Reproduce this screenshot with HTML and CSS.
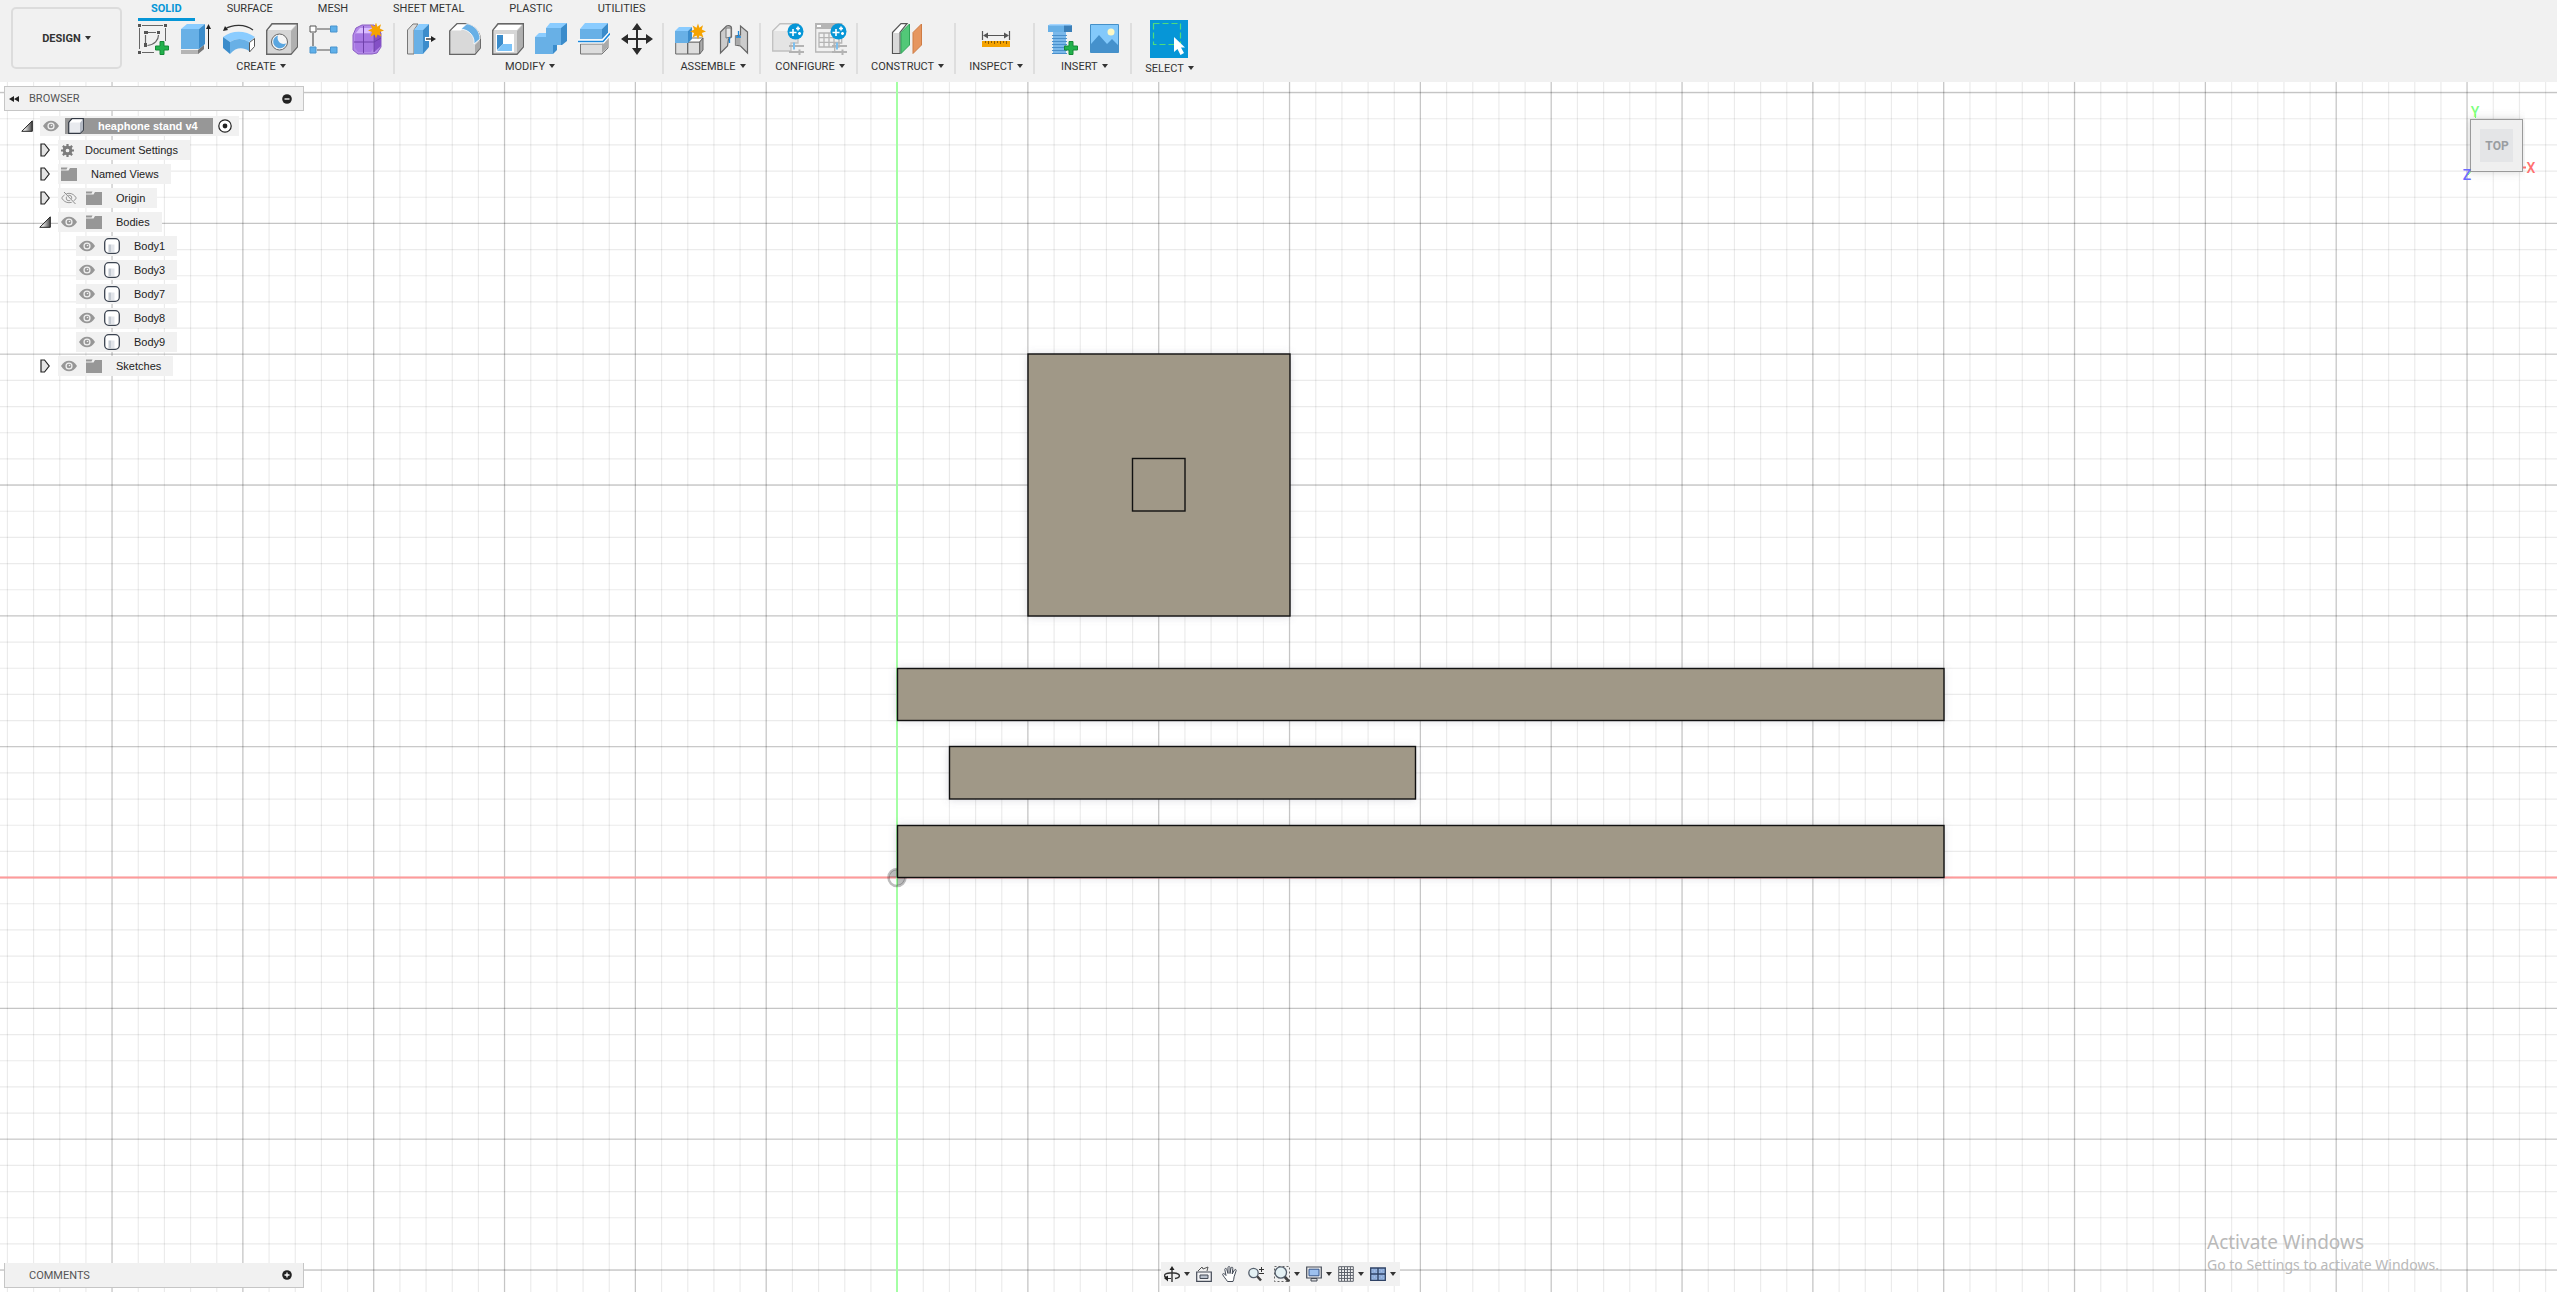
FILE: index.html
```html
<!DOCTYPE html>
<html lang="en">
<head>
<meta charset="utf-8">
<title>heaphone stand v4</title>
<link rel="stylesheet" href="styles.css">
</head>
<body>
<svg class="defs" aria-hidden="true">
  <symbol id="eye" viewBox="0 0 16 12"><path d="M0 6C2 2.500 5 .8 8 .8S14 2.500 16 6c-2 3.500-5 5.200-8 5.200S2 9.500 0 6z" fill="#979797"/><circle cx="8" cy="6" r="3.600" fill="#f1f1f1"/><circle cx="8" cy="6" r="2.300" fill="#979797"/><circle cx="8.500" cy="5.500" r=".8" fill="#f1f1f1"/></symbol>
  <symbol id="eye-off" viewBox="0 0 16 12"><path d="M.7 6C2.500 3 5 1.300 8 1.300S13.500 3 15.300 6C13.500 9 11 10.700 8 10.700S2.500 9 .7 6z" fill="none" stroke="#979797"/><circle cx="8" cy="6" r="2.800" fill="none" stroke="#979797"/><path d="M2.500 0l11.500 12" stroke="#f1f1f1" stroke-width="2"/><path d="M3 0l11.500 12" stroke="#8a8a8a"/></symbol>
  <symbol id="folder" viewBox="0 0 16 14"><path d="M0 3.500h7.500L9 1h7v13H0z" fill="#979797"/><path d="M0 .6h6.500L5.500 2.400H0z" fill="#979797"/></symbol>
  <symbol id="body" viewBox="0 0 16 16"><rect x=".7" y=".7" width="14.600" height="14.600" rx="4" fill="#fff" stroke="#3b4350" stroke-width="1.300"/><path d="M4.500 6.500h3v7.500h-3z" fill="#c3c9d1"/><path d="M7.500 6.500h3V14h-3z" fill="#e2e5ea"/></symbol>
  <symbol id="closed" viewBox="0 0 10 14"><path d="M1 1h3.500L9.200 7 4.500 13H1z" fill="#e4e4e4" stroke="#222" stroke-width="1.200"/></symbol>
  <symbol id="open" viewBox="0 0 12 12"><path d="M11.300.8v10.500H.8z" fill="url(#tri)" stroke="#222"/></symbol>
  <symbol id="plus" viewBox="0 0 14 14"><path d="M5 .5h4V5h4.500v4H9v4.500H5V9H.5V5H5z" fill="#22b14c" stroke="#148a36"/></symbol>
  <symbol id="burst" viewBox="0 0 16 16"><path d="M8 0l1.400 4.300L13 1.700l-1.200 4.200L16 8l-4.200 1.600L13.500 14l-4-2L8 16l-1.500-4-4 2 1.600-4.400L0 8l4.200-2L2.500 2l4 2.300z" fill="#f5a300"/></symbol>
  <symbol id="config" viewBox="0 0 24 32"><circle cx="15.500" cy="8.500" r="8" fill="#0696d7"/><path d="M13 6v7M9.500 9.500h7M18 3.500v4M16 5.500h4M19.500 9v3M18 10.500h3" stroke="#fff" stroke-width="1.600"/><path d="M9 23h15M9 29h15" stroke="#b3b3b3" stroke-width="2"/><path d="M14 19.500v7" stroke="#7cc0f0" stroke-width="2"/><path d="M19.500 26.500v6" stroke="#b3b3b3" stroke-width="2"/></symbol>
  <linearGradient id="tri"><stop offset=".2" stop-color="#fff"/><stop offset="1" stop-color="#444"/></linearGradient>
</svg>

<div class="app">
<header class="toolbar">
  <button class="workspace" type="button">DESIGN<i class="caret"></i></button>
  <div class="ribbon">
    <nav class="tabs">
      <a class="tab active" href="#solid">SOLID</a><a class="tab" href="#surface">SURFACE</a><a class="tab" href="#mesh">MESH</a><a class="tab" href="#sheet-metal">SHEET METAL</a><a class="tab" href="#plastic">PLASTIC</a><a class="tab" href="#utilities">UTILITIES</a>
    </nav>
    <div class="groups">
      <section class="group">
        <div class="tools">
          <button class="tool" type="button" aria-label="Create Sketch"><svg viewBox="0 0 32 32"><path d="M5 2.500h21M2.500 5v21M5 29.500h12M28.500 5v13" stroke="#666" fill="none"/><path d="M11 9.500h8M8.500 12v8M21.500 12c0 5-4 10-11 10.500" stroke="#666" fill="none" stroke-width="1.200"/><path d="M1 1h3v3H1zM27 1h3v3h-3zM1 28h3v3H1zM7 8h4v3H7zM20 8h3v3h-3zM7 20h3v4H7z" fill="#555"/><use href="#plus" x="18" y="18" width="14" height="14"/></svg></button>
          <button class="tool" type="button" aria-label="Extrude"><svg viewBox="0 0 32 32"><path d="M1 27h17l6-5v4l-6 5H1z" fill="#b5b5b5"/><path d="M18 27l6-5v4l-6 5z" fill="#777"/><path d="M1 6h18v20H1z" fill="#68b0e6"/><path d="M1 6l6-5h18l-6 5z" fill="#8accff"/><path d="M19 6l6-5v20l-6 5z" fill="#3b8ccb"/><path d="M28.500 26V5" stroke="#222"/><path d="M28.500 1L31 6h-5z" fill="#222"/></svg></button>
          <button class="tool" type="button" aria-label="Revolve"><svg viewBox="0 0 32 32"><path d="M2 6c8-5 20-5 28 1" stroke="#333" fill="none" stroke-width="1.300"/><path d="M0 8l2-5 3 4z" fill="#222"/><path d="M0 14C9 7 22 7 32 14l-6 5c-6-4-13-4-19 0z" fill="#8accff"/><path d="M7 19c6-4 13-4 19 0v9c-6-4-13-4-19 3z" fill="#68b0e6"/><path d="M0 14l7 5v12l-7-6z" fill="#3b8ccb"/><path d="M26.500 19.500l5-4v8l-5 5.500z" fill="#fff" stroke="#555"/></svg></button>
          <button class="tool" type="button" aria-label="Hole"><svg viewBox="0 0 32 32"><path d="M.7 7.500L6 .7h25.300V24L25 31.300H.7z" fill="#d6d6d6" stroke="#666" stroke-width="1.400"/><path d="M2 7l4.500-5h23L25 7z" fill="#f4f4f4"/><path d="M25 8l5.500-6v22L25 30z" fill="#b0b0b0"/><circle cx="13.500" cy="19" r="8" fill="#f5f5f5" stroke="#666"/><path d="M12 12.500a6.500 6.500 0 1 0 8 8c-5 2-10-3-8-8z" fill="#5aa6e0"/></svg></button>
          <button class="tool" type="button" aria-label="Rectangular Pattern"><svg viewBox="0 0 32 32"><path d="M8 6h13M4 10v13M8 27h13" stroke="#555" stroke-width="1.200"/><path d="M1 3h6v6H1z" fill="#fff" stroke="#555"/><path d="M21.500 3h6.500v6h-6.500zM21.500 24h6.500v6h-6.500zM1 24h6v6H1z" fill="#5fb0ea" stroke="#4a94cd"/></svg></button>
          <button class="tool" type="button" aria-label="Create Form"><svg viewBox="0 0 32 32"><path d="M1 12l3-7 6-3h12l7 8v14l-4 6-5 1H6l-5-4z" fill="#b48be8" stroke="#8a5cc4"/><path d="M3 11h18v15l-2 3H6l-3-4z" fill="#a777e3"/><path d="M4 10l4-5h14l-4 5z" fill="#d9bcff"/><path d="M22 11l7-3v15l-7 6z" fill="#8450c6"/><path d="M11.500 3v27M2 19h20l7-4M22 10v19" stroke="#6f41ab" fill="none"/><use href="#burst" x="16" y="-1" width="16" height="17"/></svg></button>
        </div>
        <button class="menu" type="button">CREATE<i class="caret"></i></button>
      </section>
      <section class="group">
        <div class="tools">
          <button class="tool" type="button" aria-label="Press Pull"><svg viewBox="0 0 32 32"><path d="M1.500 7L7 1h5L8 7v24H1.500z" fill="#ddd" stroke="#777"/><path d="M8 7h9v24H8z" fill="#68b0e6"/><path d="M8 7l5-6h10l-6 6z" fill="#8accff"/><path d="M17 7l6-6v23l-6 7z" fill="#3b8ccb"/><path d="M19 16h9" stroke="#fff" stroke-width="4"/><path d="M20 16h8" stroke="#222" stroke-width="1.300"/><path d="M30 16l-5-3v6z" fill="#222"/></svg></button>
          <button class="tool" type="button" aria-label="Fillet"><svg viewBox="0 0 32 32"><path d="M.7 8L8 .7h8C25 2 31 9 31.300 16v9L26 31.300H.7z" fill="#d9d9d9" stroke="#666" stroke-width="1.300"/><path d="M2 7.500L8.500 1.500H17L12 7.500z" fill="#fff"/><path d="M12 6l6-5.300C26 2 31 9 31 16l-6 5c1-7-4-14-13-15z" fill="#68b0e6" stroke="#fff" stroke-width=".8"/><path d="M26 22l5-5v8l-5 5z" fill="#aaa"/></svg></button>
          <button class="tool" type="button" aria-label="Shell"><svg viewBox="0 0 32 32"><path d="M.7 7.500L6 .7h25.300V24L25 31.300H.7z" fill="#d6d6d6" stroke="#666" stroke-width="1.400"/><path d="M2 7l4.500-5h23L25 7z" fill="#fff"/><path d="M25 8l5.500-6v22L25 30z" fill="#b0b0b0"/><path d="M4 11h18v18H4z" fill="#fff"/><path d="M5 12h6v9l-6 6z" fill="#3b8ccb"/><path d="M11 21h9v7H5z" fill="#7cc3f8"/></svg></button>
          <button class="tool" type="button" aria-label="Combine"><svg viewBox="0 0 32 32"><path d="M0 14h11V5h15v17h-8v9H0z" fill="#68b0e6"/><path d="M0 14l4-4h7v4zM11 5l4-5h17l-5 5z" fill="#8accff"/><path d="M26 5l6-5v18l-5 4h-5v5l-4 4v-9h8z" fill="#3b8ccb"/></svg></button>
          <button class="tool" type="button" aria-label="Split Body"><svg viewBox="0 0 32 32"><path d="M2.500 21H24l6-6v10l-6 6H2.500z" fill="#ddd" stroke="#777"/><path d="M24 21l5-5v9l-5 5z" fill="#aaa"/><path d="M2 6h22v10H2z" fill="#68b0e6"/><path d="M2 6l5-6h23l-6 6z" fill="#8accff"/><path d="M24 6l6-6v10l-6 6z" fill="#3b8ccb"/><path d="M0 18.500h25l7-8" fill="none" stroke="#fff" stroke-width="4"/><path d="M0 18.500h25l7-8" fill="none" stroke="#1a88dc" stroke-width="1.500"/></svg></button>
          <button class="tool" type="button" aria-label="Move/Copy"><svg viewBox="0 0 32 32"><path d="M16 4v24M4 16h24" stroke="#2b2b2b" stroke-width="2"/><path d="M16 0l5 7H11zM16 32l5-7H11zM0 16l7-5v10zM32 16l-7-5v10z" fill="#2b2b2b"/></svg></button>
        </div>
        <button class="menu" type="button">MODIFY<i class="caret"></i></button>
      </section>
      <section class="group">
        <div class="tools">
          <button class="tool" type="button" aria-label="New Component"><svg viewBox="0 0 32 32"><path d="M.7 19h12v12H.7zM12.700 19h12v12h-12z" fill="#ddd" stroke="#666"/><path d="M12.700 19l3-4H28l-3.300 4z" fill="#fff" stroke="#777"/><path d="M24.700 19l3.300-4v12l-3.300 4z" fill="#aaa" stroke="#666"/><path d="M0 8h13v12H0z" fill="#68b0e6"/><path d="M0 8l4-4h13l-4 4z" fill="#8accff"/><path d="M13 8l4-4v12l-4 4z" fill="#3b8ccb"/><use href="#burst" x="15" y="0" width="16" height="17"/></svg></button>
          <button class="tool" type="button" aria-label="Joint"><svg viewBox="0 0 32 32"><path d="M2.500 9l6-6c2-1 5 0 5 2v9l-3 2-1 7-7 7z" fill="#ccc" stroke="#666" stroke-width="1.200"/><path d="M8 5h5v9l-5 1z" fill="#e6e6e6" stroke="#777"/><path d="M29.500 9l-7-6v9l-5 1v9l5 1 7 7z" fill="#ccc" stroke="#666" stroke-width="1.200"/><path d="M17.500 13h5v9h-5z" fill="#aaa"/><path d="M11.500 14v6M20.500 8v6M18 14h5" stroke="#1a88dc" stroke-width="1.300"/></svg></button>
        </div>
        <button class="menu" type="button">ASSEMBLE<i class="caret"></i></button>
      </section>
      <section class="group">
        <div class="tools">
          <button class="tool" type="button" aria-label="Configure Design"><svg viewBox="0 0 32 32"><path d="M.7 8L8 .7h18V20h-7v8H.7z" fill="#e4e4e4" stroke="#c0c0c0" stroke-width="1.300"/><path d="M2 8l6-6h16l-6 6z" fill="#f4f4f4"/><use href="#config" x="8" width="24" height="32"/></svg></button>
          <button class="tool" type="button" aria-label="Configuration Table"><svg viewBox="0 0 32 32"><path d="M.7.700h26V20h-7v9H.7z" fill="#f1f1f1" stroke="#b5b5b5" stroke-width="1.300"/><path d="M0 0h27v6H0z" fill="#b5b5b5"/><path d="M2 2h4v2H2z" fill="#fff"/><path d="M4 10h20v14H4zM4 14.700h20M4 19.300h20M9 10v14M14 10v14M19 10v14" fill="none" stroke="#b5b5b5" stroke-width="1.300"/><use href="#config" x="8" width="24" height="32"/></svg></button>
        </div>
        <button class="menu" type="button">CONFIGURE<i class="caret"></i></button>
      </section>
      <section class="group">
        <div class="tools">
          <button class="tool" type="button" aria-label="Offset Plane"><svg viewBox="0 0 32 32"><path d="M1.500 9.500L10 .7h6L9 9.500v21H1.500z" fill="#fff" stroke="#555" stroke-width="1.200"/><path d="M2 10h6v20H2z" fill="#d9d9d9"/><path d="M10 9.500L18.500 1v21L10 30.500z" fill="#52c878" stroke="#2ea458"/><path d="M22 9.500L30.500 1v21L22 30.500z" fill="#e6965f" stroke="#cf7c44"/></svg></button>
        </div>
        <button class="menu" type="button">CONSTRUCT<i class="caret"></i></button>
      </section>
      <section class="group">
        <div class="tools">
          <button class="tool" type="button" aria-label="Measure"><svg viewBox="0 0 32 32"><path d="M2.500 8v9M29.500 8v9M5 12.500h22" stroke="#555" stroke-width="1.200"/><path d="M3 12.500l5-3v6zM29 12.500l-5-3v6z" fill="#555"/><path d="M2 18h28v6H2z" fill="#f5a300"/><path d="M5.500 18v2M8.500 18v3M11.500 18v2M14.500 18v3M17.500 18v2M20.500 18v3M23.500 18v2M26.500 18v3" stroke="#8a5a00"/></svg></button>
        </div>
        <button class="menu" type="button">INSPECT<i class="caret"></i></button>
      </section>
      <section class="group">
        <div class="tools">
          <button class="tool" type="button" aria-label="Insert Fastener"><svg viewBox="0 0 32 32"><path d="M7 9h13v22H7z" fill="#7ab8ea"/><path d="M6 12.500h15M6 15.500h15M6 18.500h15M6 21.500h15M6 24.500h15M6 27.500h15M6 30.500h15" stroke="#4a90cc"/><path d="M2 2h24v7H2z" fill="#68b0e6"/><path d="M18 2h8v7h-8z" fill="#3b7fb8"/><path d="M4 1h20l2 1.500H2z" fill="#a5d6ff"/><use href="#plus" x="18" y="18" width="14" height="14"/></svg></button>
          <button class="tool" type="button" aria-label="Insert Canvas"><svg viewBox="0 0 32 32"><path d="M1.500 1.500h28v28h-28z" fill="#83c9fb" stroke="#4590c8"/><path d="M2 21l8-9 8 9 5-5 6 6v7H2z" fill="#4591cc"/><circle cx="22" cy="9" r="3.500" fill="#fdf8c4"/></svg></button>
        </div>
        <button class="menu" type="button">INSERT<i class="caret"></i></button>
      </section>
      <section class="group">
        <div class="tools">
          <button class="tool selected" type="button" aria-label="Select"><svg viewBox="0 0 38 38"><path d="M3.500 3.500h27v21h-27z" fill="none" stroke="#4fdc7c" stroke-width="1.200" stroke-dasharray="6 3"/><path d="M24 17v15l3.500-3 3 6 3.500-2-3-5.500h4z" fill="#fff"/></svg></button>
        </div>
        <button class="menu" type="button">SELECT<i class="caret"></i></button>
      </section>
    </div>
  </div>
</header>

<main class="viewport">
  <svg class="scene" role="img" aria-label="Model, top view">
    <filter id="shadow" x="-5%" y="-20%" width="110%" height="140%"><feGaussianBlur stdDeviation="4"/></filter>
    <g transform="translate(897 795.500)">
      <g class="minor">
        <path d="M-2617.200 0H5233" stroke-width="5000" stroke-dasharray="1.200 24.967"/>
        <path d="M0 -2617.200V2617" stroke-width="8000" stroke-dasharray="1.200 24.967"/>
      </g>
      <g class="major">
        <path d="M-2617.300 0H5233" stroke-width="5000" stroke-dasharray="1.300 129.533"/>
        <path d="M0 -2617.300V2617" stroke-width="8000" stroke-dasharray="1.300 129.533"/>
      </g>
      <path class="axis-x" d="M-4000 0H4000"/>
      <path class="axis-y" d="M0 -2000V2000"/>
      <circle r="8.500" fill="none" stroke="#000" stroke-opacity=".26" stroke-width="2.500"/>
      <path d="M0 0V-8A8 8 0 0 0 -8 0zM0 0V8A8 8 0 0 0 8 0z" fill="#000" fill-opacity=".26"/>
      <g fill="#6b6b80" fill-opacity=".28" filter="url(#shadow)">
        <path d="M131-523h262v262H131zM0-209h1047v52H0zM52-130h466v52H52zM0-52h1047V0H0z"/>
      </g>
      <g class="solid">
        <rect x="131" y="-523.500" width="262" height="262"/>
        <rect x="235.500" y="-419" width="52.500" height="52.500"/>
        <rect x="0.500" y="-209" width="1046.500" height="52"/>
        <rect x="52.500" y="-131" width="466" height="52.500"/>
        <rect x="0.500" y="-52" width="1046.500" height="52"/>
      </g>
    </g>
  </svg>

  <aside class="browser">
    <div class="panel">
      <svg class="collapse" viewBox="0 0 10 6"><path d="M5 0v6L0 3zM10 0v6L5 3z" fill="#222"/></svg>
      <h2>BROWSER</h2>
      <button class="dot" type="button" aria-label="Minimize"><svg viewBox="0 0 10 10"><circle cx="5" cy="5" r="4.800" fill="#222"/><path d="M2.500 5h5" stroke="#fff" stroke-width="1.300"/></svg></button>
    </div>
    <ul class="tree">
      <li>
        <div class="row"><button class="toggle" type="button" aria-label="Collapse"><svg class="i12"><use href="#open"/></svg></button>
          <div class="node root"><svg class="eye"><use href="#eye"/></svg><span class="title"><svg class="i16" viewBox="0 0 16 16"><path d="M.7 4.500L4 .7h11.300V12L12 15.300H.7z" fill="#e8eaee" stroke="#333a45" stroke-width="1.200"/><path d="M1.500 4.500L4.500 1.500h10L12 4.500z" fill="#fff"/><path d="M12 5l3-3.500V12l-3 3z" fill="#b4bac4"/></svg><span class="name">heaphone stand v4</span></span><svg class="i14" viewBox="0 0 14 14"><circle cx="7" cy="7" r="6.200" fill="#fff" stroke="#222" stroke-width="1.200"/><circle cx="7" cy="7" r="2.400" fill="#222"/></svg></div></div>
        <ul>
          <li><div class="row"><button class="toggle" type="button" aria-label="Expand"><svg class="arrow"><use href="#closed"/></svg></button><div class="node"><svg class="gear" viewBox="0 0 14 14"><circle cx="7" cy="7" r="3.600" fill="none" stroke="#7c7c7c" stroke-width="3.200"/><path d="M7 0v3M7 11v3M0 7h3M11 7h3M2 2l2.200 2.200M9.800 9.800L12 12M12 2L9.800 4.200M4.200 9.800L2 12" stroke="#7c7c7c" stroke-width="2.400"/></svg><span class="name">Document Settings</span></div></div></li>
          <li><div class="row"><button class="toggle" type="button" aria-label="Expand"><svg class="arrow"><use href="#closed"/></svg></button><div class="node"><svg class="folder"><use href="#folder"/></svg><span class="name">Named Views</span></div></div></li>
          <li><div class="row"><button class="toggle" type="button" aria-label="Expand"><svg class="arrow"><use href="#closed"/></svg></button><div class="node"><svg class="eye"><use href="#eye-off"/></svg><svg class="folder"><use href="#folder"/></svg><span class="name">Origin</span></div></div></li>
          <li><div class="row"><button class="toggle" type="button" aria-label="Collapse"><svg class="i12"><use href="#open"/></svg></button><div class="node"><svg class="eye"><use href="#eye"/></svg><svg class="folder"><use href="#folder"/></svg><span class="name">Bodies</span></div></div>
            <ul class="leaves">
              <li><div class="row"><div class="node"><svg class="eye"><use href="#eye"/></svg><svg class="i16"><use href="#body"/></svg><span class="name">Body1</span></div></div></li>
              <li><div class="row"><div class="node"><svg class="eye"><use href="#eye"/></svg><svg class="i16"><use href="#body"/></svg><span class="name">Body3</span></div></div></li>
              <li><div class="row"><div class="node"><svg class="eye"><use href="#eye"/></svg><svg class="i16"><use href="#body"/></svg><span class="name">Body7</span></div></div></li>
              <li><div class="row"><div class="node"><svg class="eye"><use href="#eye"/></svg><svg class="i16"><use href="#body"/></svg><span class="name">Body8</span></div></div></li>
              <li><div class="row"><div class="node"><svg class="eye"><use href="#eye"/></svg><svg class="i16"><use href="#body"/></svg><span class="name">Body9</span></div></div></li>
            </ul>
          </li>
          <li><div class="row"><button class="toggle" type="button" aria-label="Expand"><svg class="arrow"><use href="#closed"/></svg></button><div class="node"><svg class="eye"><use href="#eye"/></svg><svg class="folder"><use href="#folder"/></svg><span class="name">Sketches</span></div></div></li>
        </ul>
      </li>
    </ul>
  </aside>

  <svg class="viewcube" viewBox="0 0 100 100" role="img" aria-label="View cube">
    <rect x="22" y="19" width="53" height="53" fill="#777" fill-opacity=".3" filter="url(#shadow)"/>
    <path d="M28.500 18v-4M21 75l4-5" stroke="#6f6" stroke-width="1"/>
    <rect x="23.500" y="19.500" width="52" height="52" fill="#efefef" stroke="#9a9a9a"/>
    <rect x="33" y="29" width="33" height="33" fill="#e4e5e7"/>
    <text class="face" x="50" y="50">TOP</text>
    <text class="axis" x="28" y="17" fill="#7dff7d">Y</text>
    <text class="axis" x="84" y="73" fill="#ff7070">X</text>
    <text class="axis" x="20" y="80" fill="#6c6cff">Z</text>
    <path d="M76 67.500h3" stroke="#ff7070" stroke-width="2"/>
  </svg>

  <div class="watermark"><p class="big">Activate Windows</p><p>Go to Settings to activate Windows.</p></div>

  <div class="panel comments">
    <h2>COMMENTS</h2>
    <button class="dot" type="button" aria-label="Add comment"><svg viewBox="0 0 10 10"><circle cx="5" cy="5" r="4.800" fill="#222"/><path d="M2.500 5h5M5 2.500v5" stroke="#fff" stroke-width="1.300"/></svg></button>
  </div>

  <div class="navdock"><div class="navbar">
    <button type="button" class="drop" aria-label="Orbit"><svg viewBox="0 0 16 16"><path d="M8 2v14" stroke="#333" stroke-width="1.400"/><path d="M8 0l2.500 4h-5z" fill="#222"/><path d="M11 12.500c6-1 6-5-1-5.500H6C-1 7.500-1 11 4 12" fill="none" stroke="#333" stroke-width="1.400"/><path d="M2 12.500h5" stroke="#333"/><path d="M4 9.500v6L0 12z" fill="#222"/></svg><i class="caret"></i></button>
    <button type="button" aria-label="Look At"><svg viewBox="0 0 16 16"><path d="M.7 6h14.600v9.300H.7z" fill="#f3f3f5" stroke="#444b57" stroke-width="1.200"/><path d="M4 9h8v3.500H4z" fill="#b9c0cc" stroke="#444b57"/><path d="M2 5l4-4 1 2 5-2-1 4" fill="none" stroke="#555"/></svg></button>
    <button type="button" aria-label="Pan"><svg viewBox="0 0 16 16"><path d="M5.500 15.500C4 13 1.500 10.500.6 8.500c0-1.500 2-1 3.400 1L2.800 3.500c0-1.500 1.700-1.500 2 0l1.200 4V1.500c0-1.300 2-1.300 2 0v6l1-5.500c.3-1.300 2-1 1.800.3L10.200 8l2.200-4c.8-1.200 2.200-.4 1.700.8l-2 6c0 2-.6 3-1.100 4.700z" fill="#fff" stroke="#444b57"/></svg></button>
    <button type="button" aria-label="Zoom"><svg viewBox="0 0 16 16"><path d="M8 9l5 5.500" stroke="#444" stroke-width="2.600"/><circle cx="5.500" cy="7" r="4.700" fill="#e4f1f4" stroke="#555f6c" stroke-width="1.300"/><path d="M11 3.500h5M13.500 1v5M11 7.500h5" stroke="#333"/></svg></button>
    <button type="button" class="drop" aria-label="Fit"><svg viewBox="0 0 16 16"><path d="M.5.500h15v15H.5z" fill="none" stroke="#666" stroke-dasharray="2 2"/><path d="M10 10l5 5.500" stroke="#444" stroke-width="2.800"/><circle cx="6.800" cy="6.500" r="5.700" fill="#e4f1f4" stroke="#555f6c" stroke-width="1.300"/></svg><i class="caret"></i></button>
    <button type="button" class="drop" aria-label="Display Settings"><svg viewBox="0 0 16 16"><path d="M.7 1h14.600v11H.7z" fill="#eee" stroke="#444b57" stroke-width="1.200"/><path d="M3 3.200h10v6.600H3z" fill="#9dc0ee" stroke="#35568c"/><path d="M5 12.500h6v2.500H5z" fill="#ddd" stroke="#444b57"/></svg><i class="caret"></i></button>
    <button type="button" class="drop" aria-label="Grid and Snaps"><svg viewBox="0 0 16 16"><path d="M.7.700h14.600v14.600H.7zM3.600 1v14M6.500 1v14M9.400 1v14M12.400 1v14M1 3.600h14M1 6.500h14M1 9.400h14M1 12.400h14" fill="#f5f5f5" stroke="#5a5f68"/></svg><i class="caret"></i></button>
    <button type="button" class="drop" aria-label="Viewports"><svg viewBox="0 0 16 16"><path d="M.7 2h14.600v12.300H.7z" fill="#9dbbe4" stroke="#2e4265" stroke-width="1.300"/><path d="M8 2v12.300M1 8h14" stroke="#2e4265" stroke-width="1.400"/><path d="M3 4h3v2H3zM10 4h3v2h-3zM3 10h3v2H3zM10 10h3v2h-3z" fill="#c6d9f5" stroke="#7c9dd0"/></svg><i class="caret"></i></button>
  </div></div>
</main>
</div>
</body>
</html>
```
FILE: styles.css
```css
* { box-sizing: border-box; }
body { margin: 0; font-family: Roboto, "Liberation Sans", sans-serif; font-size: 11px; color: #333; background: #fff; }
button { font: inherit; color: inherit; background: none; border: 0; padding: 0; margin: 0; }
h2, p, ul { margin: 0; padding: 0; }
ul { list-style: none; }
svg { display: block; flex: none; }
.defs { position: absolute; width: 0; height: 0; }
.app { display: flex; flex-direction: column; height: 100vh; }

.caret { display: inline-block; border: 3px solid transparent; border-top: 4px solid #333; border-bottom: 0; margin-left: 4px; vertical-align: 2px; }

/* Toolbar */
.toolbar { display: flex; gap: 15px; height: 82px; padding-left: 11px; background: #f1f1f1; flex: none; }
.workspace { width: 111px; height: 62px; margin-top: 7px; border: 2px solid #dcdcdc; border-radius: 5px; font-weight: 700; flex: none; }
.tabs { display: flex; gap: 19px; height: 21px; padding-left: 1px; }
.tab { height: 21px; padding: 0 13px; line-height: 18px; color: #333; text-decoration: none; white-space: nowrap; border-bottom: 3px solid transparent; }
.tab.active { color: #0696d7; font-weight: 700; border-color: #0696d7; }
.groups { display: flex; }
.group { position: relative; display: flex; flex-direction: column; align-items: center; padding: 0 9px 0 11px; border-right: 2px solid #dedede; height: 51px; margin-top: 2px; }
.group:first-child { padding-left: 0; }
.group:last-child { border-right: 0; }
.tools { display: flex; align-items: center; gap: 11px; height: 34px; }
.tool svg { width: 32px; height: 32px; }
.tool.selected { background: #0696d7; margin-top: -2px; }
.tool.selected svg { width: 38px; height: 38px; }
.menu { padding: 0 1px 0 2px; height: 17px; line-height: 17px; margin-top: 3px; white-space: nowrap; }

/* Model canvas */
.viewport { position: relative; flex: 1; overflow: hidden; min-height: 0; }
.scene { position: absolute; inset: 0; width: 100%; height: 100%; }
.minor { stroke: #000; stroke-opacity: .08; }
.major { stroke: #000; stroke-opacity: .16; }
.axis-x { stroke: #ff9a9a; stroke-width: 2; }
.axis-y { stroke: #a4ffa4; stroke-width: 2; }
.solid rect { fill: #a09887; stroke: #111; stroke-width: 1.4; }

/* Panels */
.panel { display: flex; align-items: center; width: 300px; height: 25px; padding: 0 11px 0 4px; background: #f1f1f1; border: 1px solid #c6c6c6; }
.panel h2 { flex: 1; font-size: 11px; font-weight: 400; color: #555; }
.collapse { width: 10px; height: 6px; margin-right: 10px; }
.dot svg { width: 10px; height: 10px; }
.comments { position: absolute; left: 4px; bottom: 4px; padding-left: 24px; border-top: 0; }
.browser { position: absolute; left: 4px; top: 4px; }

/* Browser tree */
.tree { padding: 5px 0 0 16px; font-family: "Liberation Sans", Arial, sans-serif; font-size: 11px; color: #222; }
.tree ul { padding-left: 18px; }
.tree .leaves { padding-left: 38px; }
.row { display: flex; height: 20px; margin-bottom: 4px; }
.toggle { width: 20px; display: flex; align-items: center; padding-left: 1px; }
.node { display: flex; align-items: center; gap: 9px; padding: 0 12px 0 3px; background: #f1f1f1; white-space: nowrap; }
.name { margin-left: 5px; }
.root { gap: 5px; padding-right: 7px; }
.title { display: flex; align-items: center; gap: 9px; height: 16px; padding: 0 15px 0 3px; margin-left: 1px; background: #979797; color: #fff; font-weight: 700; }
.eye { width: 16px; height: 12px; }
.folder { width: 16px; height: 14px; }
.gear { width: 13px; height: 13px; }
.gear + .name { margin-left: 2px; }
.arrow { width: 10px; height: 14px; margin-left: 1px; }
.i12 { width: 12px; height: 12px; }
.i14 { width: 14px; height: 14px; }
.i16 { width: 16px; height: 16px; }

/* View cube */
.viewcube { position: absolute; right: 10px; top: 18px; width: 100px; height: 100px; overflow: visible; }
.face { font-size: 12px; font-weight: 700; fill: #999da1; text-anchor: middle; }
.axis { font-size: 14px; font-weight: 500; text-anchor: middle; }

.watermark { position: absolute; right: 113px; bottom: 17px; color: #b9b9b9; font-family: "Noto Sans", "Open Sans", sans-serif; font-size: 14px; line-height: 20px; width: 237px; white-space: nowrap; }
.watermark .big { font-size: 19px; line-height: 26px; }

/* Navigation bar */
.navdock { position: absolute; left: 0; right: 0; bottom: 6px; display: flex; justify-content: center; padding-left: 4px; pointer-events: none; }
.navbar { display: flex; align-items: center; gap: 10px; height: 24px; padding: 0 4px 0 3px; background: #f1f1f1; pointer-events: auto; }
.navbar button { display: flex; align-items: center; }
.navbar .drop { margin-right: -4px; }
.navbar .drop:last-child { margin-right: 0; }
.navbar svg { width: 16px; height: 16px; }
```
